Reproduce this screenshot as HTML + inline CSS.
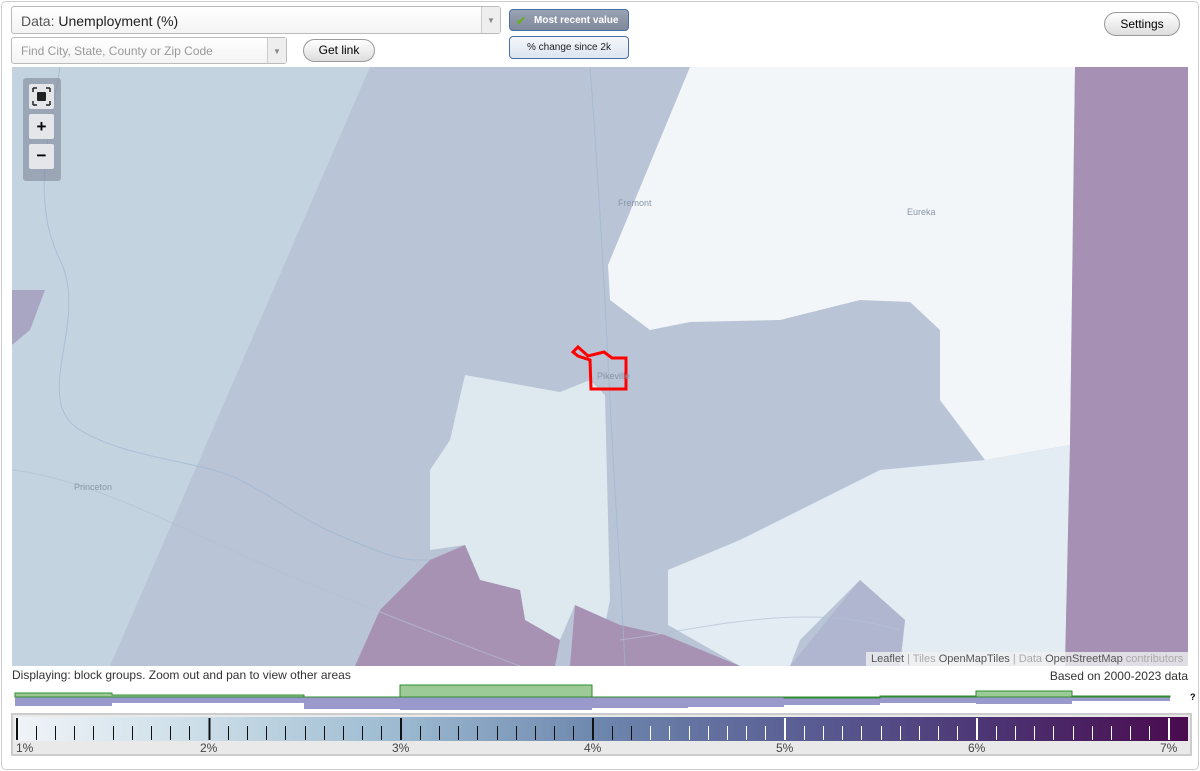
<!DOCTYPE html>
<html><head><style>
body{margin:0;width:1200px;height:771px;background:#fff;font-family:"Liberation Sans",sans-serif;position:relative;overflow:hidden}
.frame{position:absolute;left:1px;top:1px;width:1196px;height:767px;border:1px solid #ccc;border-radius:5px}
.sel{position:absolute;border:1px solid #bbb;border-radius:3px;background:linear-gradient(#fff,#f3f3f3);box-sizing:border-box}
.arr{position:absolute;right:0;top:0;bottom:0;width:18px;border-left:1px solid #ccc;background:#eee;font-size:8px;color:#888;text-align:center}
.btn{position:absolute;border:1px solid #999;border-radius:12px;background:linear-gradient(#fff,#ddd);font-size:12px;text-align:center;box-sizing:border-box}
.t{position:absolute;font-size:12px;color:#333}
</style></head><body>
<div class="frame"></div>
<div class="sel" style="left:11px;top:6px;width:490px;height:28px;font-size:14px;color:#555;padding:6px 9px">Data: <span style="color:#222">Unemployment (%)</span><div class="arr" style="line-height:28px">▼</div></div>
<div class="sel" style="left:11px;top:37px;width:276px;height:27px;font-size:12px;color:#999;padding:6px 9px">Find City, State, County or Zip Code<div class="arr" style="line-height:27px">▼</div></div>
<div class="btn" style="left:303px;top:39px;width:72px;height:23px;line-height:21px">Get link</div>
<div style="position:absolute;left:509px;top:9px;width:120px;height:22px;border:1px solid #4a6fa5;border-radius:4px;background:linear-gradient(#9aa3b3,#7f899b);color:#fff;font-size:10px;font-weight:bold;line-height:22px;box-sizing:border-box;padding-left:24px">Most recent value<span style="position:absolute;left:6px;top:0;color:#6aaa2a;font-size:12px">✔</span></div>
<div style="position:absolute;left:509px;top:36px;width:120px;height:23px;border:1px solid #4a6fa5;border-radius:4px;background:linear-gradient(#f4f7fb,#dbe5f0);color:#222;font-size:10px;line-height:21px;text-align:center;box-sizing:border-box">% change since 2k</div>
<div class="btn" style="left:1104px;top:12px;width:76px;height:24px;line-height:22px">Settings</div>

<svg style="position:absolute;left:12px;top:67px" width="1176" height="599" viewBox="12 67 1176 599">
<rect x="12" y="67" width="1176" height="599" fill="#b9c4d6"/>
<polygon points="12,67 370,67 110,666 12,666" fill="#c4d3e0"/>
<polygon points="690,67 1075,67 1070,445 985,460 940,400 940,330 910,302 860,300 780,320 690,322 650,330 610,300 608,265" fill="#f2f6f9"/>
<polygon points="465,375 560,392 590,380 605,395 610,600 605,625 575,605 560,640 525,620 520,590 480,580 465,545 430,550 430,470 450,440" fill="#dee8ef"/>
<polygon points="668,570 740,540 800,510 880,470 985,460 1070,445 1065,666 900,666 905,620 860,580 800,640 790,666 740,666 668,625" fill="#e3ecf2"/>
<polygon points="1075,67 1188,67 1188,666 1065,666 1070,445" fill="#a690b3"/>
<polygon points="355,666 380,610 430,560 465,545 480,580 520,590 525,620 560,640 555,666" fill="#a892b4"/>
<polygon points="570,666 575,605 620,625 665,635 740,666" fill="#a892b4"/>
<polygon points="790,666 860,580 905,620 900,666" fill="#b0b6cf"/>
<polygon points="12,290 45,290 30,330 12,345" fill="#a9a6c4"/>
<g fill="none" stroke="#9cb6d2" stroke-width="1" opacity=".7">
<path d="M60,67 C50,130 30,200 60,260 S30,400 80,430 S200,460 240,480 S300,520 350,540 S400,560 430,560"/>
<path d="M590,67 C600,200 605,300 610,400 S620,560 625,666"/>
</g>
<g fill="none" stroke="#b3c2d2" stroke-width="1" opacity=".7">
<path d="M12,470 C100,480 200,540 300,580 S450,640 520,666"/>
<path d="M620,640 C700,630 800,600 900,630"/>
</g>
<path d="M573,352 L578,347 L588,356 L604,352 L612,358 L626,358 L626,389 L591,389 L590,360 L578,356 Z" fill="none" stroke="#f00" stroke-width="3"/>
<g font-size="9" fill="#8a97a8" font-family="Liberation Sans">
<text x="618" y="206">Fremont</text><text x="907" y="215">Eureka</text><text x="597" y="379">Pikeville</text><text x="74" y="490">Princeton</text></g>
</svg>
<div style="position:absolute;left:23px;top:78px;width:38px;height:103px;background:rgba(120,130,145,.55);border-radius:3px"></div>
<div style="position:absolute;left:29px;top:84px;width:25px;height:25px;background:#e4e6ea;border-radius:2px">
<svg width="25" height="25"><rect x="8" y="8" width="9" height="9" rx="1" fill="#222"/><path d="M4,4h4M4,4v4M21,4h-4M21,4v4M4,21h4M4,21v-4M21,21h-4M21,21v-4" stroke="#222" stroke-width="1.5"/></svg></div>
<div style="position:absolute;left:29px;top:114px;width:25px;height:25px;background:#e4e6ea;border-radius:2px;font:bold 17px 'Liberation Sans';text-align:center;line-height:25px">+</div>
<div style="position:absolute;left:29px;top:144px;width:25px;height:25px;background:#e4e6ea;border-radius:2px;font:bold 17px 'Liberation Sans';text-align:center;line-height:23px">−</div>
<div style="position:absolute;left:866px;top:652px;width:322px;height:14px;background:rgba(240,240,240,.8);font-size:11px;color:#aaa;line-height:14px;padding-left:5px;box-sizing:border-box"><span style="color:#555">Leaflet</span> | Tiles <span style="color:#555">OpenMapTiles</span> | Data <span style="color:#555">OpenStreetMap</span> contributors</div>
<div class="t" style="left:12px;top:668px">Displaying: block groups. Zoom out and pan to view other areas</div>
<div class="t" style="right:12px;top:669px">Based on 2000-2023 data</div>

<svg style="position:absolute;left:0;top:680px" width="1200" height="32">
<g fill="#999acb">
<rect x="15" y="17" width="97" height="9"/><rect x="112" y="17" width="96" height="6"/><rect x="208" y="17" width="96" height="6"/><rect x="304" y="17" width="96" height="12"/><rect x="400" y="17" width="192" height="13"/><rect x="592" y="17" width="96" height="11"/><rect x="688" y="17" width="96" height="10"/><rect x="784" y="17" width="96" height="8"/><rect x="880" y="17" width="96" height="6"/><rect x="976" y="17" width="96" height="7"/><rect x="1072" y="17" width="98" height="4"/></g>
<polygon points="15,17 15,13 112,13 112,15 304,15 304,17 400,17 400,5 592,5 592,17 688,17 688,17 784,17 784,18 880,18 880,16 976,16 976,11 1072,11 1072,16 1170,16 1170,17" fill="#9dcb98" stroke="#2e8b2e" stroke-width="1"/>
<text x="1190" y="20" font-size="9" font-weight="bold">?</text>
</svg>
<div style="position:absolute;left:11px;top:713px;width:1181px;height:43px;border:2px solid #ccc;box-sizing:border-box;background:#e9e9e9">
<div style="position:absolute;left:2px;top:2px;right:2px;height:24px;background:linear-gradient(90deg,#f0f4f8,#c8dbe6 17%,#9bb9d0 33%,#6d86ad 50%,#5a5e94 67%,#4c3574 83%,#4a0a4e)"></div>
<div style="position:absolute;top:26px;left:0;width:100%;font-size:12px;color:#444">
<span style="position:absolute;left:3px">1%</span><span style="position:absolute;left:187px">2%</span><span style="position:absolute;left:379px">3%</span><span style="position:absolute;left:571px">4%</span><span style="position:absolute;left:763px">5%</span><span style="position:absolute;left:955px">6%</span><span style="position:absolute;left:1147px">7%</span></div>
</div>
<svg style="position:absolute;left:0;top:0" width="1200" height="771">
<g stroke-width="1">
<path stroke="#111" stroke-width="2" d="M17,718V740M209.5,718V740M401,718V740M593,718V740"/>
<path stroke="#fff" stroke-width="2" d="M785,718V740M977,718V740M1169,718V740"/>
<path stroke="#111" d="M36.5,726V740M55.5,726V740M74.5,726V740M93.5,726V740M113.5,726V740M132.5,726V740M151.5,726V740M170.5,726V740M189.5,726V740M228.5,726V740M247.5,726V740M266.5,726V740M285.5,726V740M305.5,726V740M324.5,726V740M343.5,726V740M362.5,726V740M381.5,726V740M420.5,726V740M439.5,726V740M458.5,726V740M477.5,726V740M497.5,726V740M516.5,726V740M535.5,726V740M554.5,726V740M573.5,726V740M612.5,726V740M631.5,726V740"/>
<path stroke="#fff" d="M650.5,726V740M669.5,726V740M689.5,726V740M708.5,726V740M727.5,726V740M746.5,726V740M765.5,726V740M804.5,726V740M823.5,726V740M842.5,726V740M861.5,726V740M881.5,726V740M900.5,726V740M919.5,726V740M938.5,726V740M957.5,726V740M996.5,726V740M1015.5,726V740M1034.5,726V740M1053.5,726V740M1073.5,726V740M1092.5,726V740M1111.5,726V740M1130.5,726V740M1149.5,726V740"/>
</g></svg>
</body></html>
